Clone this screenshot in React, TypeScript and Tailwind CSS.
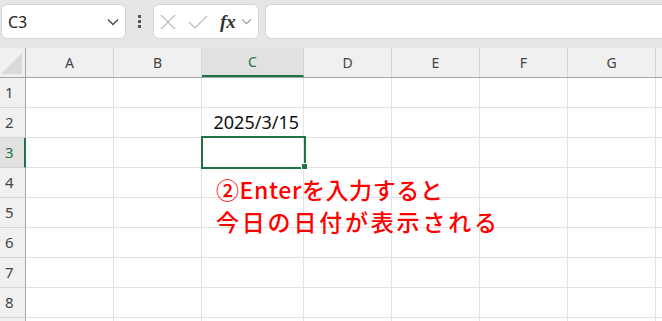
import React from "react";

const cols = [
  { name: "A", w: 88 },
  { name: "B", w: 88 },
  { name: "C", w: 102 },
  { name: "D", w: 88 },
  { name: "E", w: 88 },
  { name: "F", w: 88 },
  { name: "G", w: 88 },
  { name: "", w: 88 },
];

const rows = [1, 2, 3, 4, 5, 6, 7, 8, 9];

function Chevron({ className }: { className?: string }) {
  return (
    <svg viewBox="0 0 12 8" className={className} fill="none" stroke="currentColor" strokeWidth="1.3">
      <path d="M1 1.5l5 5 5-5" />
    </svg>
  );
}

function Toolbar() {
  return (
    <div className="flex h-[48px] items-start gap-0 bg-[#e6e6e6] pt-[4px] pl-[1px]">
      <div className="flex h-[35px] w-[125px] items-center justify-between rounded-[6px] border border-[#d6d6d6] bg-white pl-[6px] pr-[6px]">
        <span className="text-[16px] text-[#222]">C3</span>
        <Chevron className="h-[8px] w-[12px] text-[#444]" />
      </div>
      <div className="flex h-[35px] w-[27px] flex-col items-center justify-center gap-[2px]">
        <span className="h-[3px] w-[3px] bg-[#555]" />
        <span className="h-[3px] w-[3px] bg-[#555]" />
        <span className="h-[3px] w-[3px] bg-[#555]" />
      </div>
      <div className="flex h-[35px] w-[106px] items-center rounded-[6px] border border-[#d6d6d6] bg-white pl-[6px]">
        <svg viewBox="0 0 16 16" className="h-[16px] w-[16px] text-[#bdbdbd]" fill="none" stroke="currentColor" strokeWidth="1.2">
          <path d="M1 1l14 14M15 1L1 15" />
        </svg>
        <svg viewBox="0 0 20 16" className="ml-[12px] h-[16px] w-[20px] text-[#bdbdbd]" fill="none" stroke="currentColor" strokeWidth="1.2">
          <path d="M1 8l6 6L19 2" />
        </svg>
        <span className="ml-[12px] font-['Liberation_Serif',serif] text-[19px] font-bold italic leading-none text-[#333]">fx</span>
        <Chevron className="ml-[5px] h-[7px] w-[11px] text-[#999]" />
      </div>
      <div className="ml-[6px] h-[35px] flex-1 rounded-l-[6px] border border-r-0 border-[#d6d6d6] bg-white" />
    </div>
  );
}

export default function App() {
  return (
    <div className="h-[321px] w-[662px] overflow-hidden bg-white font-['Noto_Sans','Noto_Sans_CJK_JP',sans-serif]">
      <Toolbar />
      <div className="relative">
        {/* column headers */}
        <div className="flex h-[30px] border-b border-[#a6a6a6]">
          <div className="relative h-full w-[26px] shrink-0 border-r border-[#a6a6a6] bg-[#f0f0f0]">
            <svg viewBox="0 0 22 22" className="absolute bottom-[3px] right-[3px] h-[21px] w-[21px]">
              <path d="M22 0V22H0Z" fill="#d9d9d9" />
            </svg>
          </div>
          {cols.map((c, i) => {
            const sel = c.name === "C";
            return (
              <div
                key={i}
                style={{ width: c.w }}
                className={
                  sel
                    ? "flex h-full shrink-0 items-center justify-center border-r border-b-2 border-r-[#d4d4d4] border-b-[#217346] bg-[#e1e1e1] text-[14px] text-[#217346]"
                    : "flex h-full shrink-0 items-center justify-center border-r border-[#d4d4d4] bg-[#f0f0f0] text-[14px] text-[#444]"
                }
              >
                {c.name}
              </div>
            );
          })}
        </div>
        {rows.map((r) => (
          <div key={r} className="flex h-[30px]">
            <div
              className={
                r === 3
                  ? "flex h-full w-[26px] shrink-0 items-center border-r-2 border-b border-r-[#217346] border-b-[#d4d4d4] bg-[#e1e1e1] pl-[5px] text-[15px] text-[#217346]"
                  : "flex h-full w-[26px] shrink-0 items-center border-r border-b border-r-[#a6a6a6] border-b-[#d4d4d4] bg-[#f0f0f0] pl-[5px] text-[15px] text-[#444]"
              }
            >
              {r < 9 ? r : ""}
            </div>
            {cols.map((c, i) => (
              <div
                key={i}
                style={{ width: c.w }}
                className="flex h-full shrink-0 items-center justify-end border-r border-b border-[#e1e1e1] pr-[4px] text-[18px] text-[#111]"
              >
                {r === 2 && c.name === "C" ? "2025/3/15" : ""}
              </div>
            ))}
          </div>
        ))}

        {/* selection box on C3 */}
        <div className="absolute left-[201px] top-[88px] h-[33px] w-[105px] border-2 border-[#217346]" />
        <div className="absolute left-[301px] top-[115px] h-[7px] w-[7px] border border-white bg-[#217346]" />

        {/* annotation */}
        <div className="absolute left-[216px] top-[125px] font-['Noto_Sans_CJK_JP',sans-serif] text-[23px] font-medium leading-[32px] text-[#ff0000]">
          <div className="tracking-[0.6px]">②Enterを入力すると</div>
          <div className="tracking-[2.8px]">今日の日付が表示される</div>
        </div>
      </div>
    </div>
  );
}
